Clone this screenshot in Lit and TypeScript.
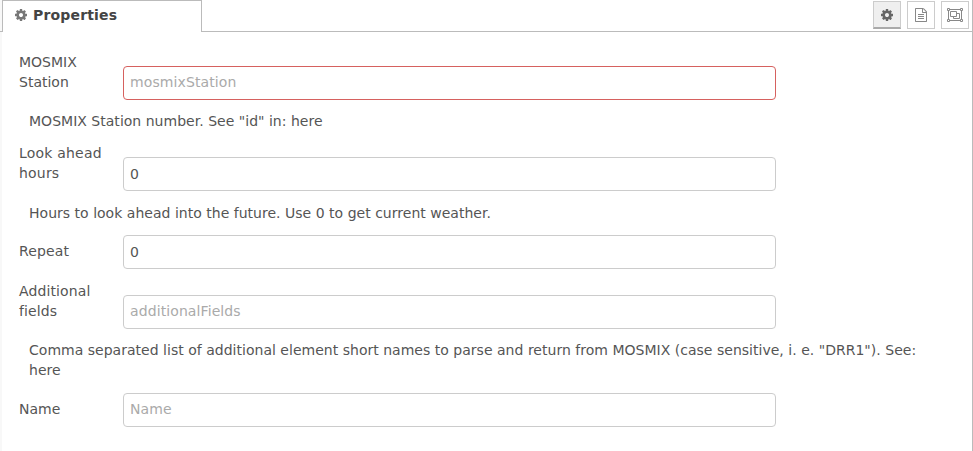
import { LitElement, html, css, svg, nothing } from "lit";
import { customElement } from "lit/decorators.js";
import { classMap } from "lit/directives/class-map.js";

interface Field {
  id: string;
  label: string;
  placeholder?: string;
  value?: string;
  invalid?: boolean;
  hint?: string;
}

const FIELDS: Field[] = [
  {
    id: "station",
    label: "MOSMIX Station",
    placeholder: "mosmixStation",
    invalid: true,
    hint: 'MOSMIX Station number. See "id" in: here',
  },
  {
    id: "ahead",
    label: "Look ahead hours",
    value: "0",
    hint: "Hours to look ahead into the future. Use 0 to get current weather.",
  },
  { id: "repeat", label: "Repeat", value: "0" },
  {
    id: "additional",
    label: "Additional fields",
    placeholder: "additionalFields",
    hint: 'Comma separated list of additional element short names to parse and return from MOSMIX (case sensitive, i. e. "DRR1"). See: here',
  },
  { id: "name", label: "Name", placeholder: "Name" },
];

const cog = svg`<path d="M1152 896q0-106-75-181t-181-75-181 75-75 181 75 181 181 75 181-75 75-181zm512-109v222q0 12-8 23t-20 13l-185 28q-19 54-39 91 35 50 107 138 10 12 10 25t-9 23q-27 37-99 108t-94 71q-12 0-26-9l-138-108q-44 23-91 38-16 136-29 186-7 28-36 28h-222q-14 0-24.500-8.500t-11.500-21.500l-28-184q-49-16-90-37l-141 107q-10 9-25 9-14 0-25-11-126-114-165-168-7-10-7-23 0-12 8-23 15-21 51-66.500t54-70.500q-27-50-41-99l-183-27q-13-2-21-12.500t-8-23.500v-222q0-12 8-23t19-13l186-28q14-46 39-92-40-57-107-138-10-12-10-24 0-10 9-23 26-36 98.500-107.500t94.500-71.500q13 0 26 10l138 107q44-23 91-38 16-136 29-186 7-28 36-28h222q14 0 24.500 8.500t11.500 21.500l28 184q49 16 90 37l142-107q9-9 24-9 13 0 25 10 129 119 165 170 7 8 7 22 0 12-8 23-15 21-51 66.500t-54 70.500q26 50 41 98l183 28q13 2 21 12.500t8 23.500z"/>`;

const cogIcon = html`<svg class="icon" width="14" height="14" viewBox="0 0 1792 1792">${cog}</svg>`;

const fileIcon = html`<svg class="icon" width="14" height="14" viewBox="0 0 1792 1792">
  <path d="M1596 380q28 28 48 76t20 88v1152q0 40-28 68t-68 28h-1344q-40 0-68-28t-28-68v-1600q0-40 28-68t68-28h896q40 0 88 20t76 48zm-444-244v376h376q-10-29-22-41l-313-313q-12-12-41-22zm384 1528v-1024h-416q-40 0-68-28t-28-68v-416h-768v1536h1280zm-1024-864q0-14 9-23t23-9h704q14 0 23 9t9 23v64q0 14-9 23t-23 9h-704q-14 0-23-9t-9-23v-64zm736 224q14 0 23 9t9 23v64q0 14-9 23t-23 9h-704q-14 0-23-9t-9-23v-64q0-14 9-23t23-9h704zm0 256q14 0 23 9t9 23v64q0 14-9 23t-23 9h-704q-14 0-23-9t-9-23v-64q0-14 9-23t23-9h704z"/>
</svg>`;

const groupIcon = html`<svg class="icon outline" width="16" height="14" viewBox="0 0 16 14">
  <path d="M.5.5h2v2h-2zM13.500.5h2v2h-2zM.5 11.500h2v2h-2zM13.500 11.500h2v2h-2zM3 1.500h10M3 12.500h10M1.500 3v8M14.500 3v8M3.500 3.500h6v5h-6zM10 5.500h2.500v5h-6v-1.500"/>
</svg>`;

@customElement("app-root")
export class AppRoot extends LitElement {
  static styles = css`
    :host {
      display: block;
      height: 451px;
      overflow: hidden;
      background: #fff;
      color: #555;
      font: 14px/20px "DejaVu Sans", sans-serif;
    }
    .panel {
      box-sizing: border-box;
      height: 100%;
      border-right: 1px solid #bbb;
      background: linear-gradient(to right, #f8f8f8 2px, #fff 2px);
    }
    .header {
      display: flex;
      height: 32px;
    }
    .edge {
      box-sizing: border-box;
      width: 2px;
      border-bottom: 1px solid #bbb;
    }
    .tab {
      box-sizing: border-box;
      width: 200px;
      padding: 4px 0 0 11px;
      border: 1px solid #bbb;
      border-bottom: 0;
      background: #fff;
      display: flex;
      align-items: flex-start;
      gap: 5px;
      color: #444;
      font-weight: bold;
      letter-spacing: 0.17px;
    }
    .tab .icon {
      margin-top: 3px;
      fill: #777;
    }
    .tools {
      box-sizing: border-box;
      flex: 1;
      display: flex;
      justify-content: flex-end;
      gap: 6px;
      padding: 1px 3px 0 0;
      border-bottom: 1px solid #bbb;
    }
    .tool {
      box-sizing: border-box;
      width: 28px;
      height: 28px;
      padding: 0;
      border: 1px solid #ccc;
      background: #fff;
      display: flex;
      align-items: center;
      justify-content: center;
    }
    .tool.active {
      background: #efefef;
      border-bottom: 2px solid #aaa;
    }
    .icon {
      display: block;
      flex: none;
      fill: #888;
    }
    .active .icon {
      fill: #666;
      margin-top: 1px;
    }
    .icon.outline {
      fill: none;
      stroke: #888;
    }
    .form {
      padding: 20px 19px 0;
    }
    .row {
      display: flex;
      align-items: flex-end;
      margin-bottom: 12px;
    }
    .label {
      width: 104px;
      padding-right: 14px;
      box-sizing: border-box;
      margin-bottom: 8px;
    }
    .ahead .label {
      letter-spacing: 0.2px;
    }
    .additional .label {
      letter-spacing: 0.12px;
    }
    .repeat .label {
      letter-spacing: 0.15px;
    }
    .input {
      box-sizing: border-box;
      width: 653px;
      height: 34px;
      padding: 0 6px;
      border: 1px solid #ccc;
      border-radius: 4px;
      background: #fff;
      color: #555;
      font: inherit;
      outline: none;
    }
    .input:placeholder-shown {
      padding-bottom: 2px;
      letter-spacing: 0.1px;
    }
    .input::placeholder {
      color: #aaa;
      opacity: 1;
    }
    .input.invalid {
      border-color: #d6615f;
    }
    .hint {
      margin: 0 10px 12px;
      letter-spacing: 0.018px;
    }
    .hinted {
      margin-bottom: 11px;
    }
    .ahead {
      margin-bottom: 12px;
    }
    .long {
      margin-bottom: 13px;
    }
  `;

  private renderField(f: Field) {
    return html`
      <div class=${classMap({ row: true, hinted: !!f.hint, [f.id]: true })}>
        <label class="label" for=${f.id}>${f.label}</label>
        <input
          class=${classMap({ input: true, invalid: !!f.invalid })}
          id=${f.id}
          type="text"
          placeholder=${f.placeholder ?? ""}
          .value=${f.value ?? ""}
        />
      </div>
      ${f.hint
        ? html`<div class=${classMap({ hint: true, long: f.id === "additional" })}>${f.hint}</div>`
        : nothing}
    `;
  }

  render() {
    return html`
      <div class="panel">
        <div class="header">
          <div class="edge"></div>
          <div class="tab">${cogIcon}<span>Properties</span></div>
          <div class="tools">
            <button class="tool active" aria-label="Properties">${cogIcon}</button>
            <button class="tool" aria-label="Description">${fileIcon}</button>
            <button class="tool" aria-label="Appearance">${groupIcon}</button>
          </div>
        </div>
        <div class="form">${FIELDS.map((f) => this.renderField(f))}</div>
      </div>
    `;
  }
}
